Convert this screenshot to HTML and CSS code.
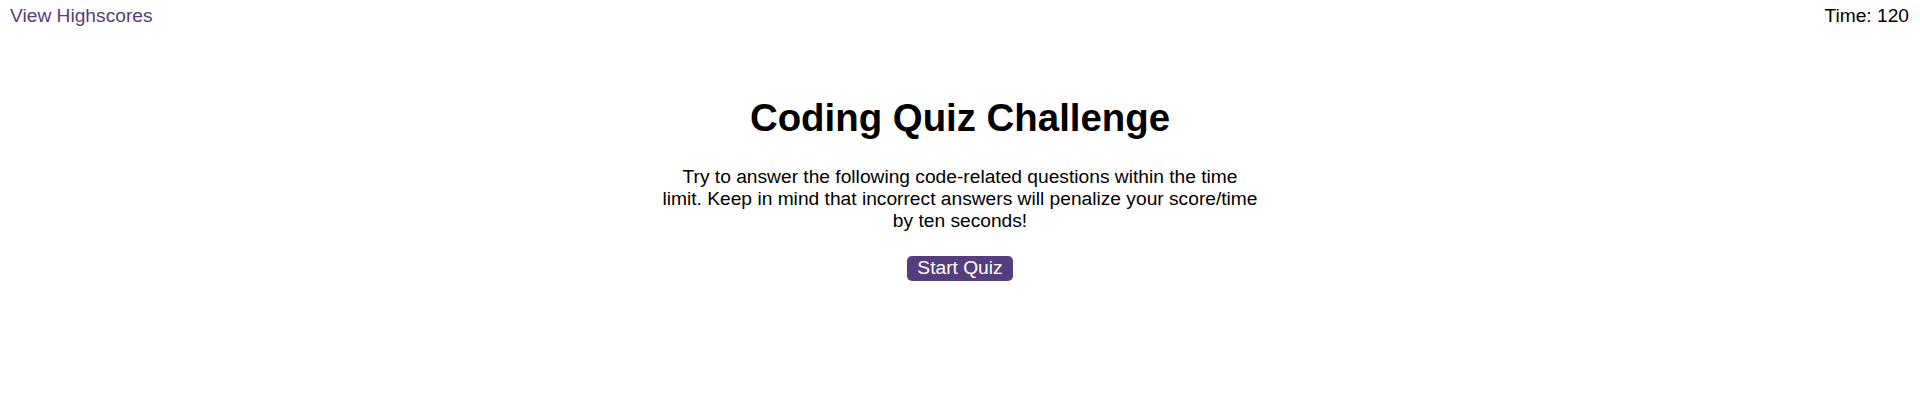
FILE: index.html
```html
<!DOCTYPE html>
<html lang="en">
<head>
<meta charset="utf-8">
<title>Coding Quiz</title>
<link rel="stylesheet" href="styles.css">
</head>
<body>
<header class="top-bar">
  <a class="highscores-link" href="#">View Highscores</a>
  <div class="timer">Time: <span class="time-left">120</span></div>
</header>
<main class="quiz">
  <h1 class="quiz-title">Coding Quiz Challenge</h1>
  <p class="quiz-intro">Try to answer the following code-related questions within the time limit. Keep in mind that incorrect answers will penalize your score/time by ten seconds!</p>
  <div class="actions">
    <button class="start-btn" type="button">Start Quiz</button>
  </div>
</main>
</body>
</html>
```
FILE: styles.css
```css
html, body {
  margin: 0;
  padding: 0;
  background: #ffffff;
}

body {
  font-family: "Liberation Sans", Arial, sans-serif;
  font-size: 19.2px;
  color: #000000;
}

.top-bar {
  display: flex;
  justify-content: space-between;
  align-items: flex-start;
  padding: 5px 11px 0 10px;
}

.highscores-link {
  color: #563d7c;
  text-decoration: none;
}

.timer {
  color: #000000;
}

.quiz {
  width: 598px;
  margin: 0 auto;
  padding-top: 69px;
  text-align: center;
}

.quiz-title {
  font-size: 38.4px;
  font-weight: bold;
  margin: 0 0 25.7px;
}

.quiz-intro {
  margin: 0 0 24px;
}

.actions {
  display: flex;
  justify-content: center;
}

.start-btn {
  font-family: inherit;
  font-size: 19.2px;
  line-height: 22px;
  color: #ffffff;
  background: #563d7c;
  border: none;
  border-radius: 5px;
  padding: 1px 10px 2px;
  cursor: pointer;
}
```
